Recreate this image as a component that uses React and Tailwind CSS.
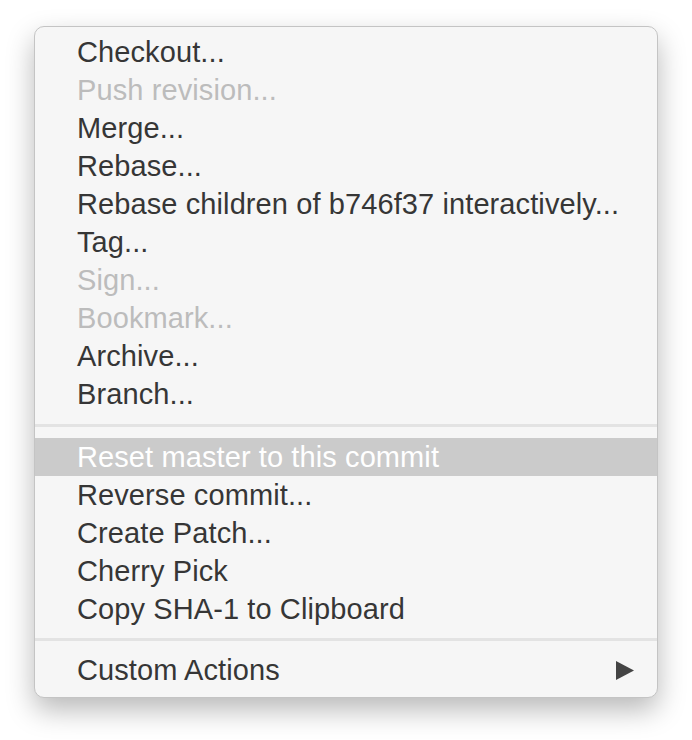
import React from "react";

const groups = [
  [
    { label: "Checkout..." },
    { label: "Push revision...", disabled: true },
    { label: "Merge..." },
    { label: "Rebase..." },
    { label: "Rebase children of b746f37 interactively..." },
    { label: "Tag..." },
    { label: "Sign...", disabled: true },
    { label: "Bookmark...", disabled: true },
    { label: "Archive..." },
    { label: "Branch..." },
  ],
  [
    { label: "Reset master to this commit", active: true },
    { label: "Reverse commit..." },
    { label: "Create Patch..." },
    { label: "Cherry Pick" },
    { label: "Copy SHA-1 to Clipboard" },
  ],
  [{ label: "Custom Actions", submenu: true }],
];

const MenuItem = ({ item }) => {
  let cls = "text-[#363636]";
  if (item.disabled) cls = "text-[#bcbcbc]";
  if (item.active) cls = "text-white bg-[#cbcbcb]";
  return (
    <div className={`h-[38px] flex items-center justify-between pl-[42px] pr-[23px] ${cls}`}>
      <span>{item.label}</span>
      {item.submenu && (
        <svg width="18" height="19" viewBox="0 0 18 19">
          <path d="M0 0 L18 9.5 L0 19 Z" fill="#444" />
        </svg>
      )}
    </div>
  );
};

export default function App() {
  return (
    <div className="min-h-screen bg-white pt-[26px] pl-[34px]">
      <div
        className="w-[624px] rounded-[10px] bg-[#f6f6f6] border border-[#c4c4c4] shadow-[0_12px_28px_rgba(0,0,0,0.28)] pt-[6px] pb-[8px] text-[29px] tracking-[0.1px] leading-none"
        style={{ fontFamily: '"Liberation Sans", Arial, sans-serif' }}
      >
        {groups.map((group, gi) => (
          <div key={gi}>
            {gi === 1 && (
              <div className="pt-[11px] pb-[11px]">
                <div className="h-[3px] bg-[#e3e3e3]"></div>
              </div>
            )}
            {gi === 2 && (
              <div className="pt-[10px] pb-[10px]">
                <div className="h-[3px] bg-[#e3e3e3]"></div>
              </div>
            )}
            {group.map((item) => (
              <MenuItem key={item.label} item={item} />
            ))}
          </div>
        ))}
      </div>
    </div>
  );
}
